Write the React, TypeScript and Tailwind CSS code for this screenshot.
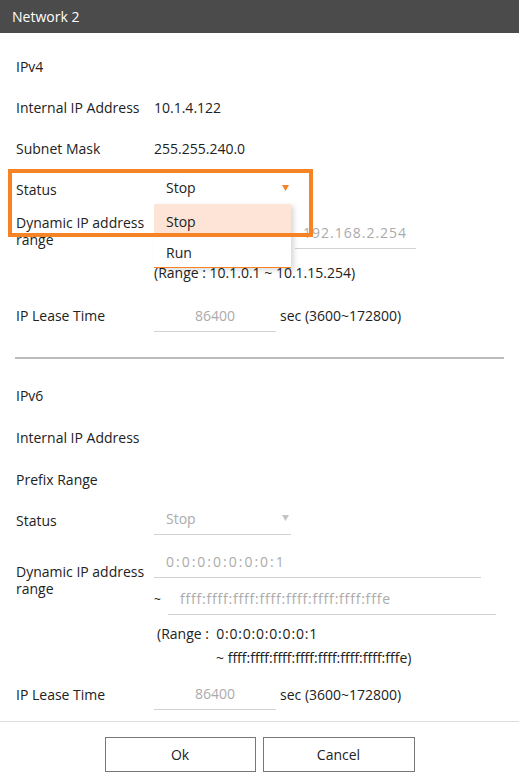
const Arrow = ({ color }: { color: string }) => (
  <svg width="7" height="6" viewBox="0 0 7 6" className="shrink-0">
    <path d="M0 0 H7 L3.5 6 Z" fill={color} />
  </svg>
);

const Row = ({ label, h = "h-[41px]", children }: { label: string; h?: string; children?: React.ReactNode }) => (
  <div className={`flex items-center ${h}`}>
    <div className="w-[139px] pl-px shrink-0">{label}</div>
    {children}
  </div>
);

const Field = ({ value, className }: { value: string; className: string }) => (
  <div className={`flex items-center border-b border-[#d2d2d2] text-[#ababab] ${className}`}>{value}</div>
);

export default function App() {
  return (
    <div
      className="w-[519px] h-[783px] flex flex-col bg-white text-[14px] text-[#222] overflow-hidden"
      style={{ fontFamily: '"Open Sans", "Noto Sans", sans-serif' }}
    >
      <div className="h-[33px] shrink-0 bg-[#4b4b4b] text-white flex items-center px-[12px]">Network 2</div>

      <div className="flex-1 relative px-[15px] pt-[13px] overflow-hidden">
        {/* IPv4 */}
        <Row label="IPv4" />
        <Row label="Internal IP Address">
          <span>10.1.4.122</span>
        </Row>
        <Row label="Subnet Mask">
          <span>255.255.240.0</span>
        </Row>
        <Row label="Status">
          <div className="w-[137px] h-[30px] flex items-center justify-between pl-[12px] pr-[2px] pb-[3px] border-b border-[#f68426]">
            <span>Stop</span>
            <Arrow color="#f68426" />
          </div>
        </Row>
        <div className="flex">
          <div className="w-[139px] pl-px pt-[4px] leading-[17px] shrink-0">
            Dynamic IP address
            <br />
            range
          </div>
          <div className="flex flex-col">
            <div className="flex items-center mt-[6px]">
              <Field value="10.1.0.1" className="w-[122px] h-[33px] pl-[8px] tracking-[1px]" />
              <span className="w-[19px] text-center">~</span>
              <Field value="192.168.2.254" className="w-[121px] h-[33px] pl-[8px] tracking-[1px]" />
            </div>
            <div className="mt-[15px] leading-[17px]">(Range : 10.1.0.1 ~ 10.1.15.254)</div>
          </div>
        </div>
        <div className="flex items-center mt-[18px] h-[33px]">
          <div className="w-[139px] pl-px shrink-0">IP Lease Time</div>
          <Field value="86400" className="w-[122px] h-[33px] justify-center" />
          <span className="ml-[4px]">sec (3600~172800)</span>
        </div>
        <div className="mt-[25px] h-[2px] bg-[#bcbcbc]" />

        {/* IPv6 */}
        <div className="mt-[16px]">
          <Row label="IPv6" />
        </div>
        <Row label="Internal IP Address" h="h-[42px]" />
        <Row label="Prefix Range" h="h-[42px]" />
        <Row label="Status" h="h-[40px]">
          <div className="w-[137px] h-[30px] flex items-center justify-between pl-[12px] pr-[2px] pb-[3px] border-b border-[#d2d2d2] text-[#ababab]">
            <span>Stop</span>
            <Arrow color="#c4c4c4" />
          </div>
        </Row>
        <div className="flex">
          <div className="w-[139px] pl-px pt-[23px] leading-[17px] shrink-0">
            Dynamic IP address
            <br />
            range
          </div>
          <div className="flex flex-col">
            <Field value="0:0:0:0:0:0:0:1" className="mt-[5px] w-[327px] h-[33px] pl-[12px] tracking-[2px]" />
            <div className="flex items-center mt-[4px]">
              <span className="w-[14px] text-[12px] pt-[2px]">~</span>
              <Field
                value="ffff:ffff:ffff:ffff:ffff:ffff:ffff:fffe"
                className="w-[328px] h-[33px] pl-[12px] tracking-[0.8px]"
              />
            </div>
            <div className="mt-[7px] leading-[24px] pl-[3px]">
              <div>
                (Range :&nbsp; <span className="tracking-[0.8px]">0:0:0:0:0:0:0:1</span>
              </div>
              <div className="pl-[59px]">~ ffff:ffff:ffff:ffff:ffff:ffff:ffff:fffe)</div>
            </div>
          </div>
        </div>
        <div className="flex items-center mt-[8px] h-[32px]">
          <div className="w-[139px] pl-px shrink-0">IP Lease Time</div>
          <Field value="86400" className="w-[122px] h-[32px] justify-center" />
          <span className="ml-[4px]">sec (3600~172800)</span>
        </div>

        {/* open dropdown */}
        <div className="absolute left-[154px] top-[171px] w-[137px] bg-white border-b border-[#f68426] shadow-[3px_2px_5px_rgba(0,0,0,0.15)]">
          <div className="h-[32px] flex items-center pl-[12px] pt-[2px] bg-[#fde4d7]">Stop</div>
          <div className="h-[31px] flex items-center pl-[12px] pt-[2px]">Run</div>
        </div>

        {/* highlight frame */}
        <div className="absolute left-[8px] top-[136px] w-[305px] h-[68px] border-4 border-[#f68426]" />
      </div>

      <div className="h-[62px] shrink-0 border-t border-[#dcdcdc] flex justify-center gap-[7px] pt-[15px]">
        <button className="w-[151px] h-[35px] border border-[#777] bg-white">Ok</button>
        <button className="w-[152px] h-[35px] border border-[#777] bg-white">Cancel</button>
      </div>
    </div>
  );
}
